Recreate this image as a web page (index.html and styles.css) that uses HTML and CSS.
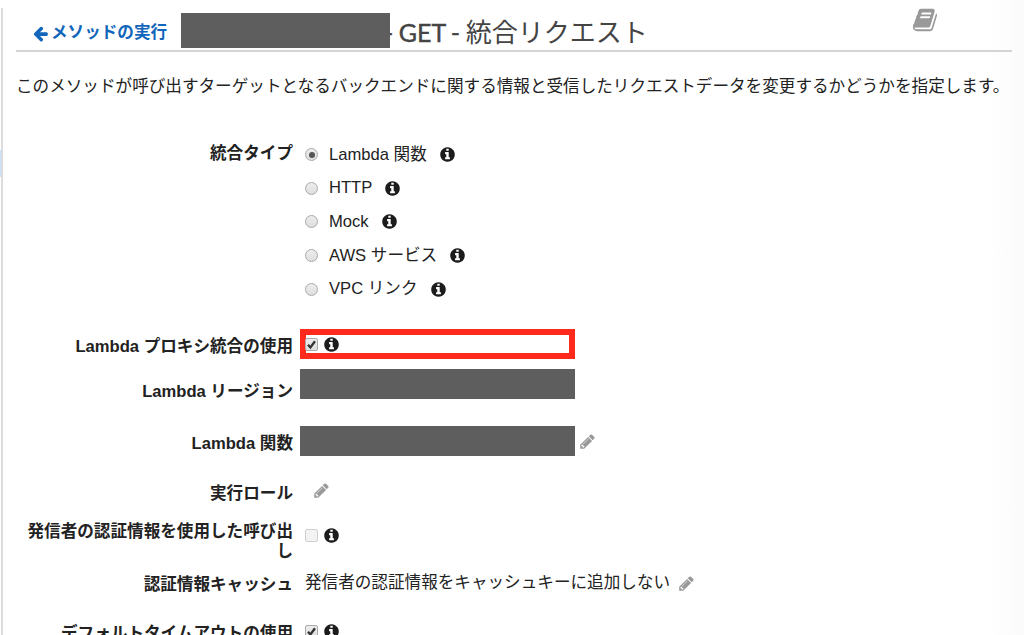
FILE: index.html
```html
<!DOCTYPE html>
<html lang="ja">

<head>
    <meta charset="UTF-8">
    <meta name="viewport" content="width=device-width, initial-scale=1.0">
    <title>GET - 統合リクエスト</title>
    <link rel="stylesheet" href="styles.css">
</head>

<body>
    <svg class="sprite" xmlns="http://www.w3.org/2000/svg">
        <symbol id="info" viewBox="0 0 1792 1792">
            <path d="M1152 1376v-160q0-14-9-23t-23-9h-96v-512q0-14-9-23t-23-9h-320q-14 0-23 9t-9 23v160q0 14 9 23t23 9h96v320h-96q-14 0-23 9t-9 23v160q0 14 9 23t23 9h448q14 0 23-9t9-23zM1024 480v-160q0-14-9-23t-23-9h-192q-14 0-23 9t-9 23v160q0 14 9 23t23 9h192q14 0 23-9t9-23zM1664 896q0 209-103 385.5t-279.5 279.5-385.5 103-385.5-103-279.5-279.5-103-385.5 103-385.5 279.5-279.5 385.5-103 385.5 103 279.5 279.5 103 385.5z"/>
        </symbol>
        <symbol id="pencil" viewBox="0 0 1792 1792">
            <path d="M491 1536l91-91-235-235-91 91v107h128v128h107zm523-928q0-22-22-22-10 0-17 7l-542 542q-7 7-7 17 0 22 22 22 10 0 17-7l542-542q7-7 7-17zm-54-192l416 416-832 832h-416v-416zm683 96q0 53-37 90l-166 166-416-416 166-165q36-38 90-38 53 0 91 38l235 234q37 39 37 91z"/>
        </symbol>
        <symbol id="arrow" viewBox="0 0 1792 1792">
            <path d="M1664 896v128q0 53-32.5 90.5t-84.5 37.5h-704l293 294q38 36 38 90t-38 90l-75 76q-37 37-90 37-52 0-91-37l-651-652q-37-37-37-90 0-52 37-91l651-650q38-38 91-38 52 0 90 38l75 74q38 38 38 91t-38 91l-293 293h704q52 0 84.5 37.5t32.5 90.5z"/>
        </symbol>
        <symbol id="book" viewBox="0 0 1792 1792">
            <path d="M1703 478q40 57 18 129l-275 906q-19 64-76.5 107.5t-122.5 43.5h-923q-77 0-148.5-53.5t-99.5-131.5q-24-67-2-127 0-4 3-27t4-37q1-8-3-21.5t-3-19.5q2-11 8-21t16.5-23.5 16.5-23.5q23-38 45-91.5t30-91.5q3-10 .5-30t-.5-28q3-11 17-28t17-23q21-36 42-92t25-90q1-9-2.5-32t.5-28q4-13 22-30.5t22-22.5q19-26 42.5-84.5t27.5-96.5q1-8-3-25.5t-2-26.5q2-8 9-18t18-23 17-21q8-12 16.5-30.5t15-35 16-36 19.5-32 26.5-23.5 36-11.5 47.5 5.5l-1 3q38-9 51-9h761q74 0 114 56t18 130l-274 906q-36 119-71.5 153.5t-128.5 34.5h-869q-27 0-38 15-11 16-1 43 24 70 144 70h923q29 0 56-15.5t35-41.5l300-987q7-22 5-57 38 15 59 43zm-1064 2q-4 13 2 22.5t20 9.5h608q13 0 25.5-9.5t16.5-22.5l21-64q4-13-2-22.5t-20-9.5h-608q-13 0-25.5 9.5t-16.5 22.5zm-83 256q-4 13 2 22.5t20 9.5h608q13 0 25.5-9.5t16.5-22.5l21-64q4-13-2-22.5t-20-9.5h-608q-13 0-25.5 9.5t-16.5 22.5z"/>
        </symbol>
        <symbol id="tick" viewBox="0 0 13 13">
            <path d="M3 6.8l2.4 2.7L10 3.3" fill="none" stroke="#333" stroke-width="2.3"/>
        </symbol>
    </svg>

    <div class="panel">
        <div class="header">
            <a class="back"><svg class="icon-arrow"><use href="#arrow"/></svg>メソッドの実行</a>
            <span class="mask mask-title"></span>
            <h1><span class="latin">- GET -</span> 統合リクエスト</h1>
            <svg class="icon-book"><use href="#book"/></svg>
        </div>

        <p class="description">このメソッドが呼び出すターゲットとなるバックエンドに関する情報と受信したリクエストデータを変更するかどうかを指定します。</p>

        <div class="form">
            <div class="row row-type">
                <div class="label">統合タイプ</div>
                <div class="options">
                    <label class="option"><span class="radio checked"></span><span>Lambda 関数</span><svg class="icon info"><use href="#info"/></svg></label>
                    <label class="option"><span class="radio"></span><span>HTTP</span><svg class="icon info"><use href="#info"/></svg></label>
                    <label class="option"><span class="radio"></span><span>Mock</span><svg class="icon info"><use href="#info"/></svg></label>
                    <label class="option"><span class="radio"></span><span>AWS サービス</span><svg class="icon info"><use href="#info"/></svg></label>
                    <label class="option"><span class="radio"></span><span>VPC リンク</span><svg class="icon info"><use href="#info"/></svg></label>
                </div>
            </div>
            <div class="row row-proxy">
                <div class="label">Lambda プロキシ統合の使用</div>
                <div class="highlight">
                    <span class="checkbox"><svg><use href="#tick"/></svg></span>
                    <svg class="icon info"><use href="#info"/></svg>
                </div>
            </div>
            <div class="row row-region">
                <div class="label">Lambda リージョン</div>
                <div class="mask mask-field"></div>
            </div>
            <div class="row row-function">
                <div class="label">Lambda 関数</div>
                <div class="mask mask-field"></div>
                <svg class="icon pencil"><use href="#pencil"/></svg>
            </div>
            <div class="row row-role">
                <div class="label">実行ロール</div>
                <svg class="icon pencil"><use href="#pencil"/></svg>
            </div>
            <div class="row row-caller">
                <div class="label">発信者の認証情報を使用した呼び出し</div>
                <div class="value">
                    <span class="checkbox disabled"></span>
                    <svg class="icon info"><use href="#info"/></svg>
                </div>
            </div>
            <div class="row row-cache">
                <div class="label">認証情報キャッシュ</div>
                <div class="value">
                    <span class="text">発信者の認証情報をキャッシュキーに追加しない</span>
                    <svg class="icon pencil"><use href="#pencil"/></svg>
                </div>
            </div>
            <div class="row row-timeout">
                <div class="label">デフォルトタイムアウトの使用</div>
                <div class="value">
                    <span class="checkbox"><svg><use href="#tick"/></svg></span>
                    <svg class="icon info"><use href="#info"/></svg>
                </div>
            </div>
        </div>
    </div>
</body>

</html>
```
FILE: styles.css
```css
* {
    margin: 0;
    padding: 0;
    box-sizing: border-box;
}

body {
    height: 635px;
    padding: 8px 0 0 1px;
    overflow: hidden;
    font-family: "Liberation Sans", "Noto Sans CJK JP", sans-serif;
    font-size: 16.6px;
    line-height: 20px;
    color: #222;
    background:
        linear-gradient(#c9e2fb, #c9e2fb) 0 150px / 1px 27px no-repeat,
        linear-gradient(to right, #fff 988px, #fafafa 1024px);
}

.sprite {
    position: absolute;
    width: 0;
    height: 0;
}

.panel {
    height: 627px;
    padding: 0 12px 0 13px;
    border-left: 2px solid #dcdcdc;
    overflow: hidden;
}

/* Header */
.header {
    display: flex;
    align-items: flex-start;
    height: 44px;
    border-bottom: 2px solid #d4d4d4;
}

.back {
    display: flex;
    align-items: center;
    width: 165px;
    padding: 15px 0 0 16px;
    color: #1166bb;
    font-weight: bold;
    white-space: nowrap;
}

.icon-arrow {
    width: 17px;
    height: 17px;
    margin: 0 2px 0 0;
    fill: currentColor;
}

.mask {
    background: #5e5e5e;
}

.mask-title {
    z-index: 1;
    width: 209px;
    height: 35px;
    margin-top: 5px;
}

h1 {
    padding-top: 8px;
    margin-left: -6px;
    font-family: Lato, "Noto Sans CJK JP", sans-serif;
    font-size: 26px;
    font-weight: 400;
    line-height: 32px;
    word-spacing: -1px;
    color: #444;
    white-space: nowrap;
}

.latin {
    font-family: Lato, sans-serif;
    font-size: 25px;
    -webkit-text-stroke: 0.4px #444;
}

.icon-book {
    width: 26px;
    height: 26px;
    margin: -1px 74px 0 auto;
    fill: #999;
}

.description {
    padding: 25px 0 40px;
    white-space: nowrap;
}

/* Form */
.row {
    display: flex;
    align-items: flex-start;
    height: 30px;
}

.label {
    width: 277px;
    margin-right: 7px;
    flex-shrink: 0;
    font-weight: bold;
    text-align: right;
}

.value {
    display: flex;
    align-items: center;
    padding-left: 5px;
}

.icon {
    width: 17px;
    height: 17px;
    flex-shrink: 0;
}

.info {
    fill: #1c1c1c;
}

.pencil {
    fill: #999;
}

.row-type {
    height: 168px;
}

.row-type .label {
    padding-top: 7px;
}

.options {
    padding: 1px 0 0 5px;
}

.option {
    display: flex;
    align-items: center;
    height: 33.6px;
}

.option .info {
    margin-left: 12px;
}

.radio {
    display: flex;
    align-items: center;
    justify-content: center;
    width: 13px;
    height: 13px;
    margin-right: 11px;
    border: 1px solid #aaa;
    border-radius: 50%;
    background: linear-gradient(#ededed, #dedede);
}

.radio.checked::before {
    content: "";
    width: 6px;
    height: 6px;
    border-radius: 50%;
    background: #555;
}

.checkbox {
    width: 13px;
    height: 13px;
    margin-right: 5px;
    flex-shrink: 0;
    border: 1px solid #aaa;
    border-radius: 2px;
    background: linear-gradient(#ededed, #dedede);
}

.checkbox svg {
    display: block;
    width: 13px;
    height: 13px;
    margin: -1px;
}

.checkbox.disabled {
    border-color: #d0d0d0;
    background: #f3f3f3;
}

.row-proxy {
    margin-top: 24px;
}

.row-proxy .label {
    padding-top: 8px;
}

.highlight {
    display: flex;
    align-items: center;
    width: 275px;
    height: 30px;
    border: 6px solid #ff2a1c;
}

.highlight .checkbox {
    margin-left: -1px;
}

.row-region {
    margin-top: 10px;
}

.mask-field {
    width: 275px;
    height: 30px;
}

.row-region .label {
    padding-top: 13px;
}

.row-function {
    margin-top: 27px;
}

.row-function .label {
    padding-top: 8px;
}

.row-function .pencil {
    margin: 7px 0 0 4px;
}

.row-role {
    margin-top: 21px;
}

.row-role .label {
    padding-top: 7px;
}

.row-role .pencil {
    margin: 5px 0 0 13px;
}

.row-caller {
    height: 40px;
    margin-top: 14px;
}

.row-caller .label {
    padding-top: 1px;
}

.row-caller .value {
    padding-top: 6px;
}

.row-cache {
    margin-top: 7px;
}

.row-cache .label {
    padding-top: 7px;
}

.row-cache .value {
    padding-top: 5px;
}

.row-cache .pencil {
    margin-left: 8px;
}

.row-timeout {
    margin-top: 19px;
}

.row-timeout .label {
    padding-top: 7px;
}

.row-timeout .value {
    padding-top: 6px;
}
```
